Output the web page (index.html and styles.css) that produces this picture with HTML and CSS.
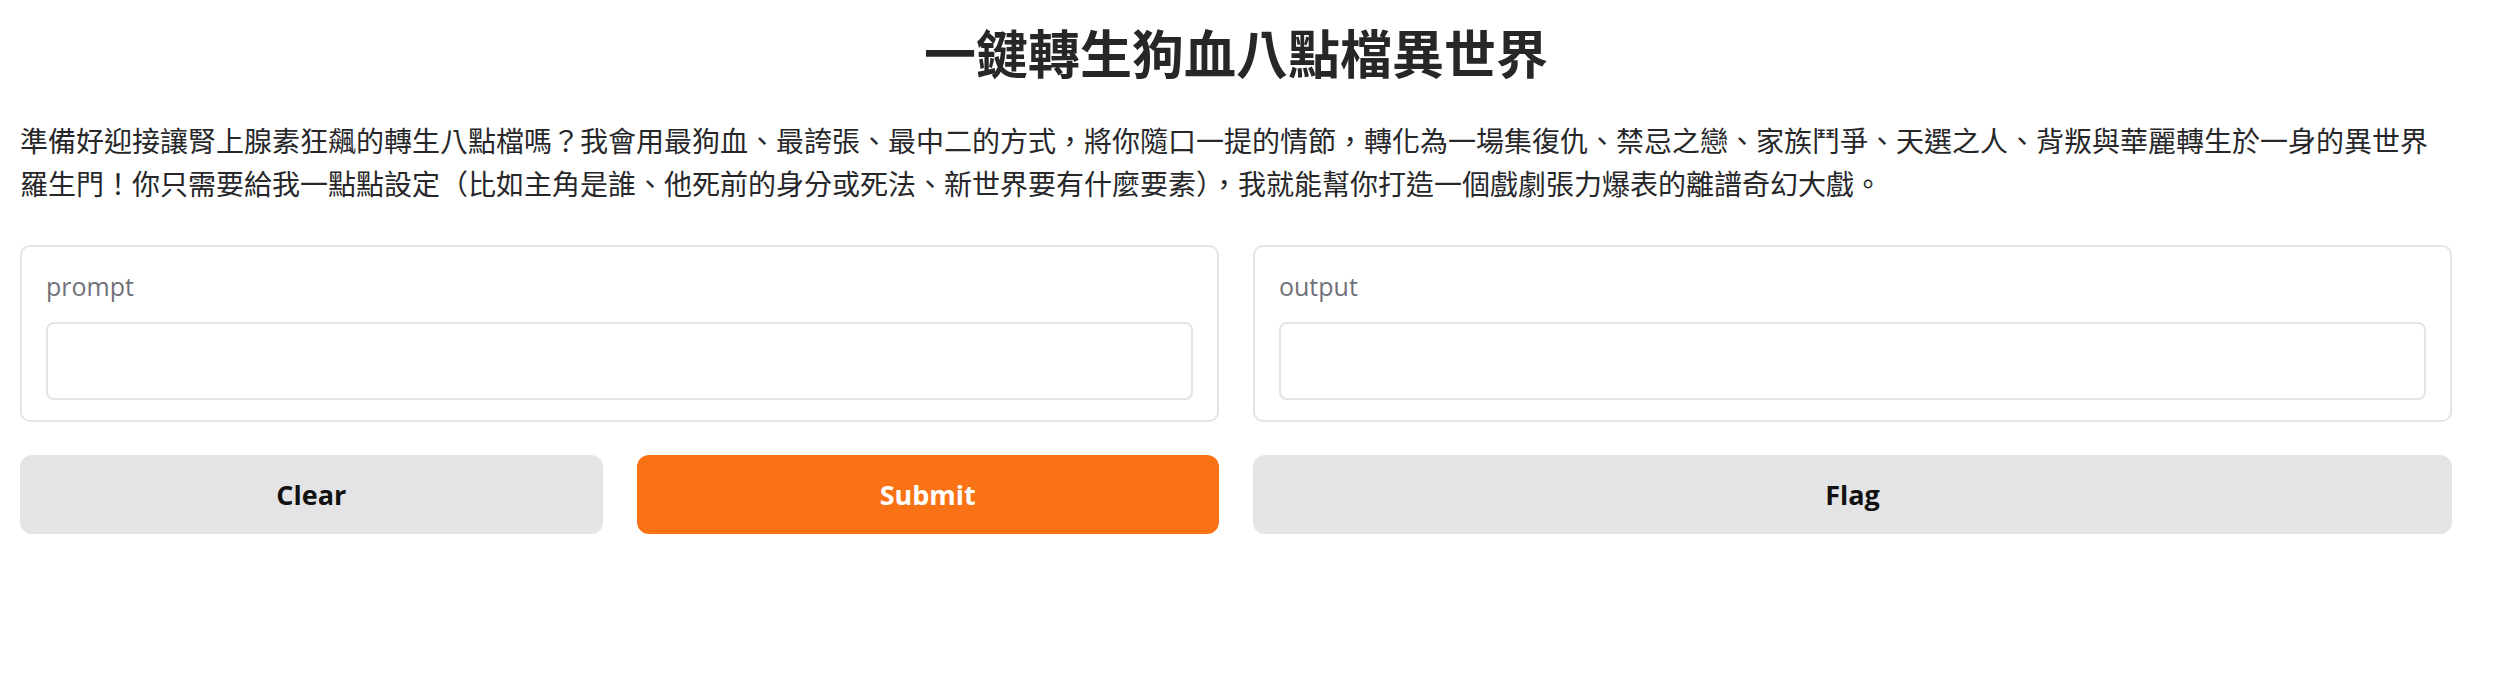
FILE: index.html
```html
<!DOCTYPE html>
<html lang="zh-Hant">
<head>
<meta charset="utf-8">
<title>一鍵轉生狗血八點檔異世界</title>
<link rel="stylesheet" href="styles.css">
</head>
<body>
<div class="app">
  <h1 class="title">一鍵轉生狗血八點檔異世界</h1>
  <p class="desc">準備好迎接讓腎上腺素狂飆的轉生八點檔嗎？我會用最狗血、最誇張、最中二的方式，將你隨口一提的情節，轉化為一場集復仇、禁忌之戀、家族鬥爭、天選之人、背叛與華麗轉生於一身的異世界羅生門！你只需要給我一點點設定（比如主角是誰、他死前的身分或死法、新世界要有什麼要素），我就能幫你打造一個戲劇張力爆表的離譜奇幻大戲。</p>
  <div class="panels">
    <div class="col">
      <div class="box">
        <label class="label">prompt</label>
        <div class="input"></div>
      </div>
      <div class="btn-row">
        <button class="btn btn-secondary">Clear</button>
        <button class="btn btn-primary">Submit</button>
      </div>
    </div>
    <div class="col">
      <div class="box">
        <label class="label">output</label>
        <div class="input"></div>
      </div>
      <div class="btn-row single">
        <button class="btn btn-secondary">Flag</button>
      </div>
    </div>
  </div>
</div>
</body>
</html>
```

FILE: styles.css
```css
html, body {
  margin: 0;
  padding: 0;
  background: #ffffff;
}

.app {
  width: 2432px;
  padding: 18px 0 0 20px;
  color: #27272a;
  font-family: "Noto Sans CJK TC", "Noto Sans", sans-serif;
}

.title {
  margin: 0 0 34px;
  font-size: 52px;
  line-height: 67px;
  font-weight: 700;
  text-align: center;
  color: #27272a;
}

.desc {
  margin: 0 0 40px;
  font-size: 28px;
  line-height: 43px;
  font-weight: 400;
  color: #27272a;
}

.panels {
  display: grid;
  grid-template-columns: 1fr 1fr;
  gap: 34px;
}

.col {
  display: flex;
  flex-direction: column;
  gap: 33px;
}

.box {
  box-sizing: border-box;
  height: 177px;
  border: 2px solid #e4e4e7;
  border-radius: 10px;
  padding: 23px 24px 20px;
  display: flex;
  flex-direction: column;
  gap: 19px;
  background: #ffffff;
}

.label {
  font-family: "Open Sans", "Noto Sans", sans-serif;
  font-size: 25px;
  line-height: 33px;
  color: #71717a;
}

.input {
  box-sizing: border-box;
  height: 78px;
  border: 2px solid #e4e4e7;
  border-radius: 8px;
  background: #ffffff;
}

.btn-row {
  display: grid;
  grid-template-columns: 1fr 1fr;
  gap: 34px;
}

.btn-row.single {
  grid-template-columns: 1fr;
}

.btn {
  height: 79px;
  border: none;
  border-radius: 12px;
  font-family: "Open Sans", "Noto Sans", sans-serif;
  font-size: 27px;
  font-weight: 700;
  display: flex;
  align-items: center;
  justify-content: center;
  padding: 0;
}

.btn-secondary {
  background: #e4e4e7;
  color: #111111;
}

.btn-primary {
  background: #f97316;
  color: #ffffff;
}
```
